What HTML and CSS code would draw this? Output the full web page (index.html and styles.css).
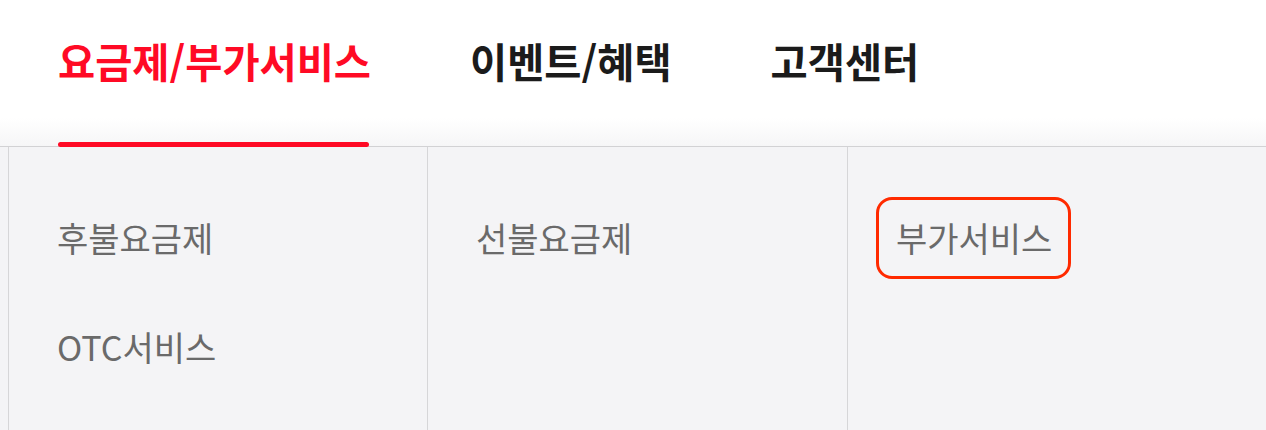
FILE: index.html
```html
<!DOCTYPE html>
<html lang="ko">
<head>
<meta charset="utf-8">
<title>메뉴</title>
<link rel="stylesheet" href="styles.css">
</head>
<body>
<header class="gnb">
  <nav class="gnb-list">
    <a class="gnb-item is-active" href="#">요금제/부가서비스</a>
    <a class="gnb-item" href="#">이벤트/혜택</a>
    <a class="gnb-item" href="#">고객센터</a>
  </nav>
</header>
<section class="submenu">
  <div class="sub-col">
    <a class="sub-item" href="#">후불요금제</a>
    <a class="sub-item" href="#">OTC서비스</a>
  </div>
  <div class="sub-col">
    <a class="sub-item" href="#">선불요금제</a>
  </div>
  <div class="sub-col">
    <a class="sub-item is-focus" href="#">부가서비스</a>
  </div>
</section>
</body>
</html>
```

FILE: styles.css
```css
* { box-sizing: border-box; }
html, body { margin: 0; padding: 0; }
body {
  width: 1266px;
  height: 430px;
  overflow: hidden;
  background: #f4f4f6;
  font-family: "Noto Sans CJK KR", "Noto Sans", sans-serif;
}
a { text-decoration: none; }

.gnb {
  height: 147px;
  background: linear-gradient(to bottom, #ffffff 0, #ffffff 118px, #f6f6f7 146px);
  border-bottom: 1px solid #d2d2d4;
}
.gnb-list {
  display: flex;
  gap: 99px;
  padding-left: 58px;
  height: 146px;
}
.gnb-item {
  position: relative;
  display: block;
  height: 146px;
  padding-top: 38px;
  font-size: 40.4px;
  line-height: 46px;
  font-weight: 700;
  color: #1b1b1b;
}
.gnb-item.is-active { color: #ff0a25; }
.gnb-item.is-active::after {
  content: "";
  position: absolute;
  left: 0;
  right: 2px;
  bottom: -1px;
  height: 5px;
  border-radius: 3px;
  background: #ff0a25;
}

.submenu {
  display: grid;
  grid-template-columns: 419px 420px 420px;
  padding-left: 8px;
  height: 283px;
}
.sub-col {
  border-left: 1px solid #d6d6d8;
  padding: 50px 0 0 28px;
  display: flex;
  flex-direction: column;
  align-items: flex-start;
  gap: 27px;
}
.sub-item {
  display: block;
  padding: 18px 16px 18px 17px;
  border: 3px solid transparent;
  border-radius: 16px;
  font-size: 34px;
  line-height: 40px;
  font-weight: 400;
  color: #6a6a6a;
}
.sub-item.is-focus { border-color: #ff2a00; }
```
